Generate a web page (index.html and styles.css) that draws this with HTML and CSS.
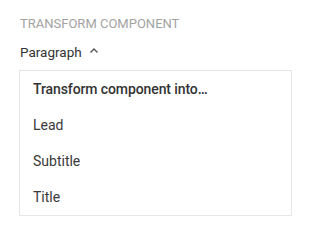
FILE: index.html
```html
<!DOCTYPE html>
<html lang="en">
<head>
	<meta charset="UTF-8">
	<title>Transform component</title>
	<link rel="stylesheet" href="styles.css">
</head>
<body>
	<div class="panel">
		<div class="panel-label">Transform component</div>
		<div class="panel-select">
			<span>Paragraph</span>
			<svg class="caret" width="10" height="7" viewBox="0 0 10 7"><path d="M1.5 5.5L5 2l3.5 3.5" fill="none" stroke="#555" stroke-width="1.4"/></svg>
		</div>
		<ul class="menu">
			<li class="menu-head">Transform component into…</li>
			<li>Lead</li>
			<li>Subtitle</li>
			<li>Title</li>
		</ul>
	</div>
</body>
</html>
```

FILE: styles.css
```css
*{
	margin: 0;
	padding: 0;
}
body{
	background: #fff;
	font-family: Roboto, "Liberation Sans", sans-serif;
	color: #333;
}
.panel{
	padding: 15px 17px 0 19px;
}
.panel-label{
	font-size: 13px;
	line-height: 18px;
	text-transform: uppercase;
	color: #a3a3a3;
	padding-left: 1px;
}
.panel-select{
	display: flex;
	align-items: center;
	gap: 4px;
	margin-top: 10px;
	font-size: 13.5px;
	line-height: 18px;
	color: #333;
	padding-left: 1px;
}
.caret{
	margin-left: 3px;
	margin-top: -3px;
}
.menu{
	list-style: none;
	margin-top: 9px;
	width: 271px;
	border: 1px solid #e6e6e6;
}
.menu li{
	font-size: 14px;
	line-height: 36px;
	padding-left: 13px;
	color: #3a3a3a;
}
.menu .menu-head{
	font-size: 14px;
	letter-spacing: -0.1px;
	font-weight: 500;
	color: #333;
}
```
